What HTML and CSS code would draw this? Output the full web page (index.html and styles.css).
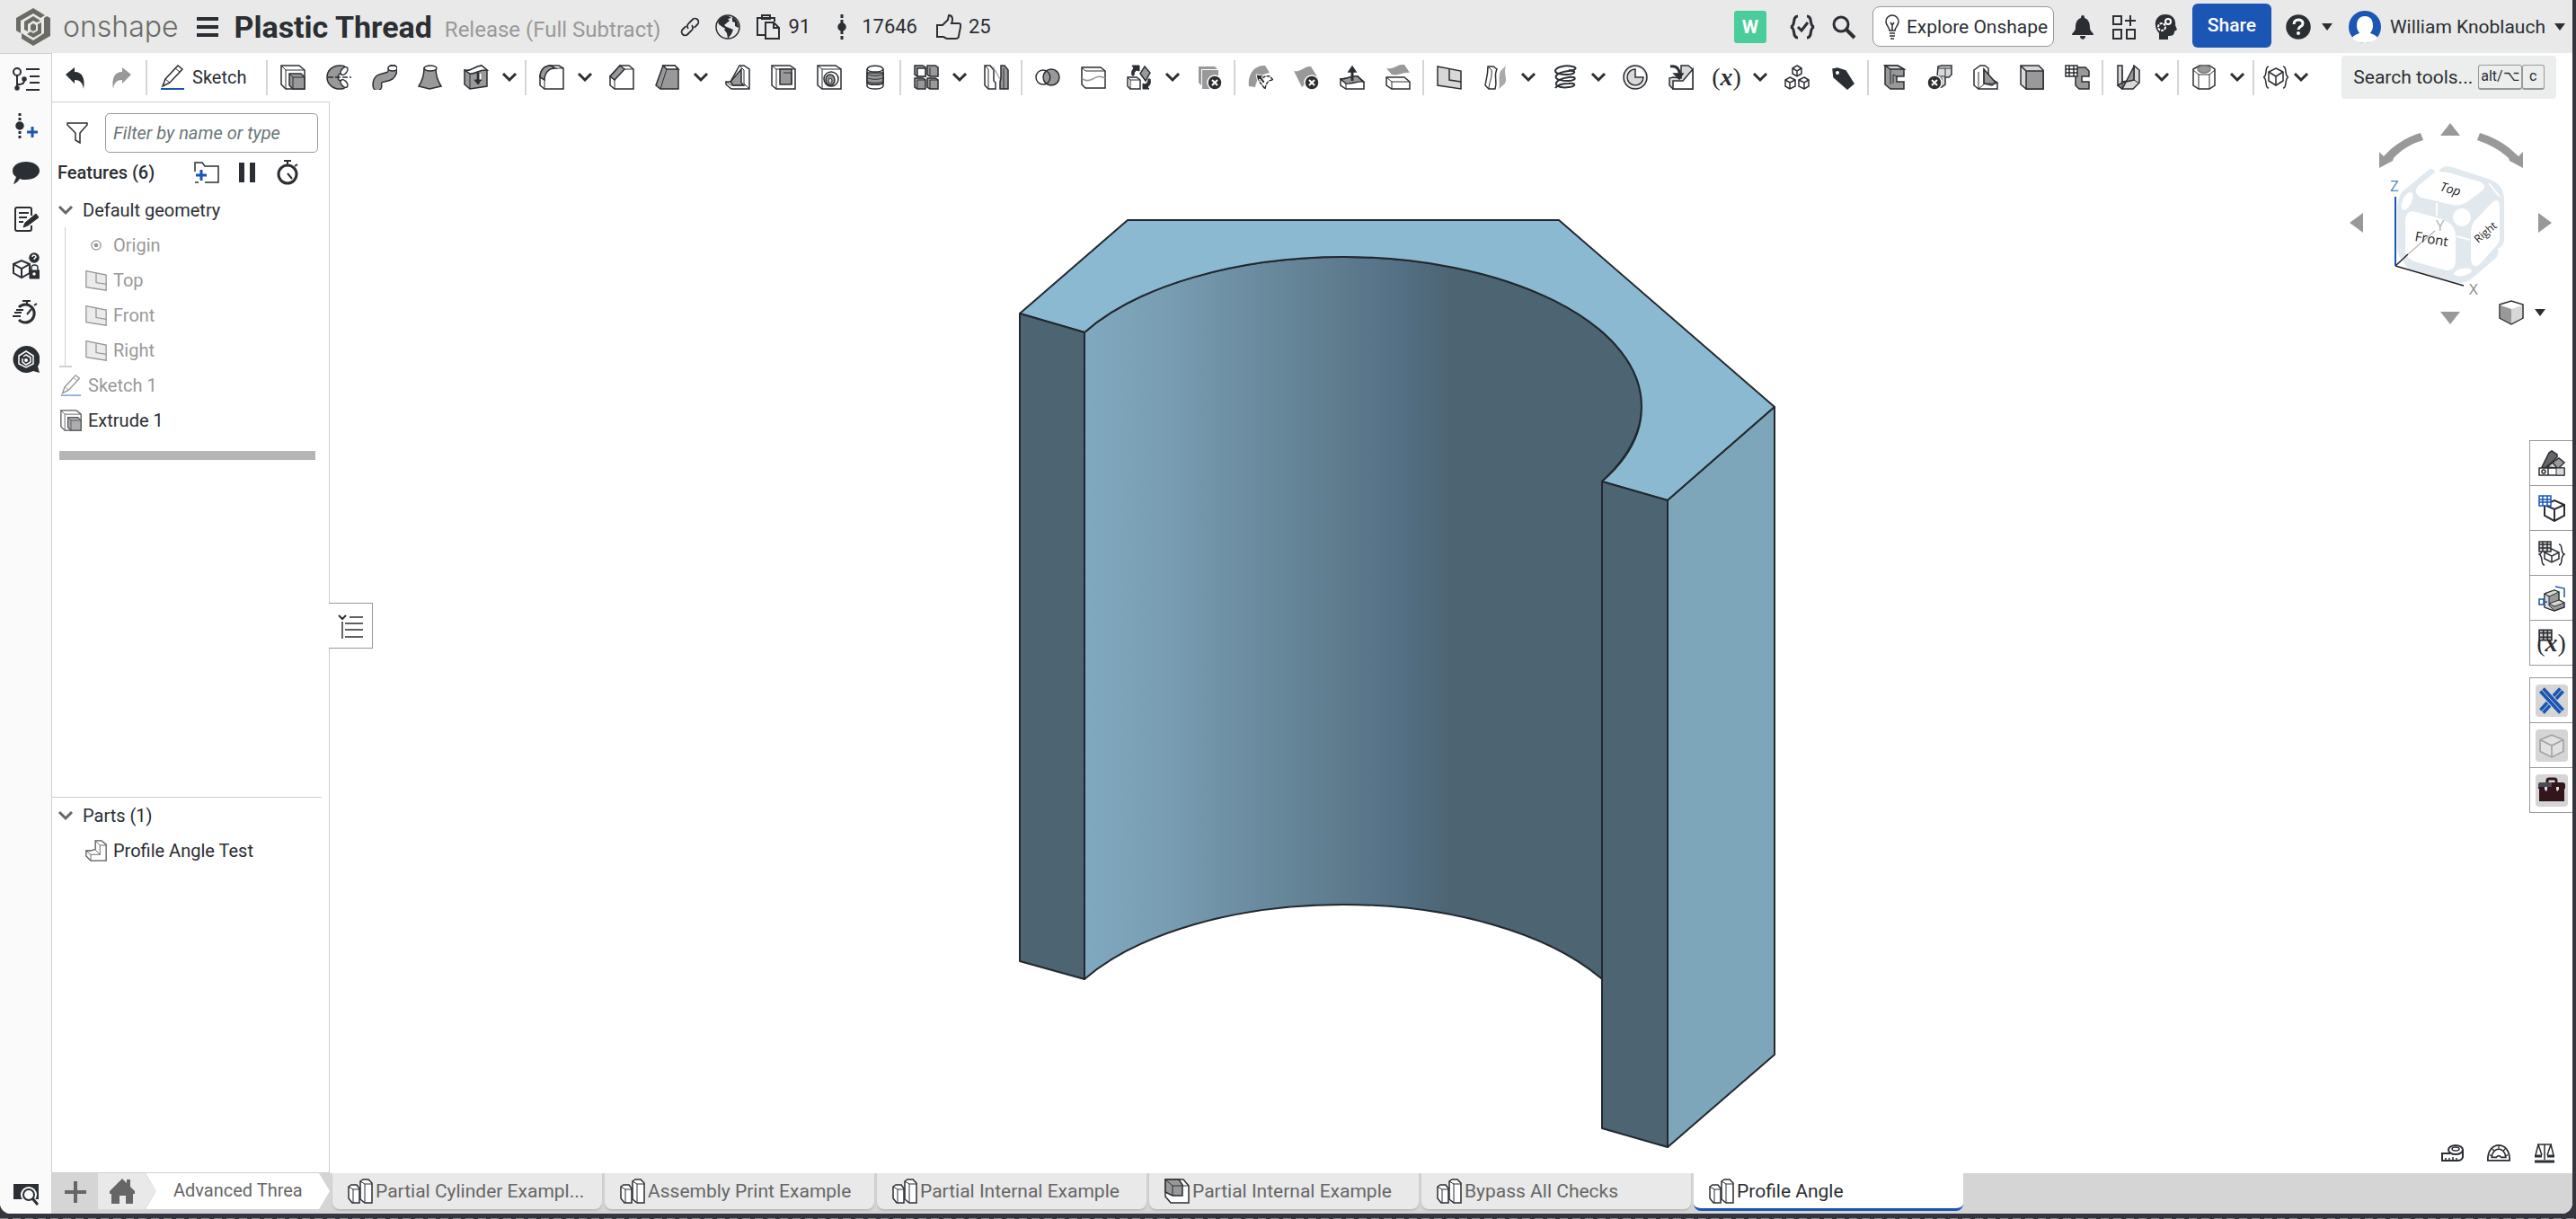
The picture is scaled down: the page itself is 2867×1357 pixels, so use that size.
FILE: index.html
```html
<!DOCTYPE html>
<html lang="en">
<head>
<meta charset="utf-8">
<title>Plastic Thread | Profile Angle</title>
<link rel="stylesheet" href="styles.css">
</head>
<body>
<svg class="sprite" aria-hidden="true">
  <symbol id="chev" viewBox="0 0 18 12"><path d="M2 2l7 7 7-7" stroke-width="3"/></symbol>
  <symbol id="caret" viewBox="0 0 12 8"><path class="k" stroke="none" d="M0 0h12L6 8z"/></symbol>
  <symbol id="extrude" viewBox="0 0 28 28"><path class="w" d="M1 1h20l6 5v21H6l-5-5z"/><path d="M1 1l5 5h21M6 6v21" stroke-width="1"/><path class="g" d="M10 10h13l4 4v13H14l-4-4z"/><path d="M10 10l4 4h13M14 14v13" stroke-width="1"/></symbol>
  <symbol id="revolve" viewBox="0 0 28 28"><path class="g" d="M17 1C8 0 1 6 1 14s7 14 16 13c3 0 5-2 6-4l-6-5c-5 0-5-8 0-8l6-5c-1-2-3-4-6-4z"/><ellipse class="w" cx="20" cy="7" rx="3" ry="5" transform="rotate(40 20 7)"/><ellipse class="w" cx="20" cy="21" rx="3" ry="5" transform="rotate(-40 20 21)"/><path d="M2 14h26" stroke-dasharray="6 2"/></symbol>
  <symbol id="sweep" viewBox="0 0 28 28"><path d="M6 24C4 8 23 20 23 5" stroke-width="11" stroke-linecap="round"/><path d="M6 24C4 8 23 20 23 5" stroke="#999" stroke-width="8" stroke-linecap="round"/><ellipse class="w" cx="23" cy="4" rx="5" ry="3"/></symbol>
  <symbol id="loft" viewBox="0 0 28 28"><path class="g" d="M7 4c0 8-2 14-6 20l12 3 13-3c-4-6-6-12-6-20z"/><ellipse class="w" cx="14" cy="4" rx="7" ry="3"/></symbol>
  <symbol id="thicken" viewBox="0 0 28 28"><path class="g" d="M1 6c6 3 10-4 19-5l6 5v18l-19 3-6-5z"/><path class="w" d="M1 6c6 3 10-4 19-5l6 5C17 5 13 11 7 10z"/><path d="M7 10v17" stroke-width="1"/><path d="M17 10v10" stroke="#fff" stroke-width="5"/><path class="k" d="M17 9v8h3l-4 5-4-5h3V9z" stroke-width="1"/></symbol>
  <symbol id="fillet" viewBox="0 0 28 28"><path class="w" d="M1 14C1 6 6 1 13 1h9l5 3v23H6l-5-4z"/><path class="g" d="M1 14C1 6 6 1 13 1l5 3C11 4 6 9 6 17z"/><path d="M6 17v10M18 4h9" stroke-width="1"/></symbol>
  <symbol id="chamfer" viewBox="0 0 28 28"><path class="w" d="M1 13L12 1h10l5 4v22H6l-5-4z"/><path class="g" d="M1 13L12 1l5 4L6 17z"/><path d="M6 17v10M17 5h10" stroke-width="1"/></symbol>
  <symbol id="draft" viewBox="0 0 28 28"><path class="g" d="M1 23L9 1h13l4 4v22H6z"/><path class="w" d="M9 1h13l4 4H13z"/><path d="M13 5L6 27" stroke-width="1"/></symbol>
  <symbol id="rib" viewBox="0 0 28 28"><path class="w" d="M1 19h5L16 1h5l6 4v22H7l-6-5z"/><path class="g" d="M6 19L18 5v15l3 3H9z"/><path d="M16 1l5 5v15l6 6M1 19l6 4h14" stroke-width="1"/></symbol>
  <symbol id="shell" viewBox="0 0 28 28"><path class="w" d="M1 1h20l6 4v22H6l-5-4z"/><path d="M1 1l5 4h21M6 5v22" stroke-width="1"/><path class="g" d="M10 5h13v17H10z"/><path d="M14 9h9v13" stroke-width="1"/></symbol>
  <symbol id="hole" viewBox="0 0 28 28"><path class="w" d="M1 1h20l6 4v22H6l-5-4z"/><path d="M1 1l5 4h21M6 5v22" stroke-width="1"/><ellipse class="w" cx="16" cy="16" rx="8" ry="8"/><ellipse class="g" cx="15" cy="17" rx="5" ry="6"/><ellipse class="l" cx="15" cy="18" rx="2" ry="3" stroke-width="1"/></symbol>
  <symbol id="thread" viewBox="0 0 28 28"><path class="w" d="M5 5v19c2 4 16 4 18 0V5c-2-5-16-5-18 0z"/><path class="g" d="M5 9h18v11c-2 3-16 3-18 0z"/><path d="M5 5c2 4 16 4 18 0" /><path d="M5 10c2 3 16 3 18 0M5 14c2 3 16 3 18 0M5 18c2 3 16 3 18 0" stroke-width="1"/></symbol>
  <symbol id="pattern" viewBox="0 0 28 28"><path class="g" d="M1 1h9l3 2v10H4l-3-2zM15 1h9l3 2v10h-9l-3-2zM1 15h9l3 2v10H4l-3-2zM15 15h9l3 2v10h-9l-3-2z"/><path class="w" d="M4 4h9v9H4z"/><path d="M18 3v9M4 17h9M18 17h9M18 17v10M4 17v10" stroke-width="1"/></symbol>
  <symbol id="mirror" viewBox="0 0 28 28"><path class="w" d="M1 1h6l4 5v12l2 2v7H5l-4-4z"/><path d="M1 1l4 4v22" stroke-width="1"/><path d="M10 2l8 14" stroke="#aaa"/><path class="g" d="M27 6v21h-9v-8l1-4V1h4z"/><path d="M22 4v23" stroke-width="1"/></symbol>
  <symbol id="boolean" viewBox="0 0 28 28"><circle class="w" cx="9" cy="14" r="8"/><circle class="g" cx="18" cy="14" r="9"/><path d="M13 7c5 4 5 10 0 14"/></symbol>
  <symbol id="split" viewBox="0 0 28 28"><path class="w" d="M1 3h21l5 4v19H5l-4-4z"/><path d="M1 3l4 4h22" stroke-width="1"/><path d="M1 15c2 2 6 4 12 1s8-4 14-1" stroke="#999"/></symbol>
  <symbol id="transform" viewBox="0 0 28 28"><path class="w" d="M1 14h10l4 3v10H4l-3-3z"/><path d="M1 14l3 3h11M4 17v10" stroke-width="1"/><path class="g" d="M20 2l6 7-5 9-6-8z"/><path class="k" d="M6 12c-1-4 0-6 2-8L6 1h8v6l-3-1c-2 1-3 3-3 6zM26 16c1 4 0 7-3 9l2 2h-7v-6l2 1c3-1 4-3 4-6z" stroke-width="1"/></symbol>
  <symbol id="delpart" viewBox="0 0 28 28"><path fill="#999" stroke="none" d="M2 2h18l3 3H5v18l-3-3zM6 6h18v21H6z"/><use href="#xdot"/></symbol>
  <symbol id="xdot" viewBox="0 0 28 28"><circle cx="20" cy="20" r="8" fill="#2b2e33" stroke="#fff"/><path d="M17 17l6 6M23 17l-6 6" stroke="#fff" stroke-width="2"/></symbol>
  <symbol id="modface" viewBox="0 0 28 28"><path fill="#999" stroke="none" d="M1 24C-1 10 8 0 19 1l5 8C15 10 9 17 8 25z"/><path class="w" d="M12 18c4-4 8-6 12-5l4 4c-5 0-8 3-9 10z" stroke-dasharray="4 1"/><path class="k" d="M9 11l9 1-3 2 4 5-2 2-4-5-2 3z" stroke="#fff" stroke-width="1"/></symbol>
  <symbol id="delface" viewBox="0 0 28 28"><path fill="#999" stroke="none" d="M0 7c7 2 12-6 19-5l8 13-4 7C17 17 11 23 9 25z"/><use href="#xdot"/></symbol>
  <symbol id="moveface" viewBox="0 0 28 28"><path class="w" d="M1 16l19-3 7 6v8H7l-6-4z"/><path class="g" d="M1 16c6 1 12-5 19-3l6 6c-7-1-12 3-19 2z"/><path d="M7 21v6" stroke-width="1"/><path d="M14 18V5" stroke-width="3"/><path class="k" d="M10 8l4-6 4 6z"/></symbol>
  <symbol id="repface" viewBox="0 0 28 28"><path fill="#999" stroke="none" d="M1 4c8 2 12-5 20-4l6 9c-8-1-12 4-20 2z"/><path class="w" d="M1 14h20l6 5v8H7l-6-4z"/><path d="M1 14l6 5h20M7 19v8" stroke-width="1"/></symbol>
  <symbol id="plane" viewBox="0 0 28 28"><path class="l" d="M1 2l26 5v20L1 23z"/><path d="M14 5v12l13 2"/></symbol>
  <symbol id="sheet" viewBox="0 0 28 28"><path class="w" d="M6 2h6l4 3c-4 8 1 12-2 22H7l-4-4C4 16 6 12 6 2z"/><path d="M6 2l4 4c1 9-3 14-3 21" stroke-width="1"/><path fill="#aaa" stroke="none" d="M20 7l6-6c-3 8 2 14-1 20l-7 6c2-7-1-12 2-20z"/></symbol>
  <symbol id="helix" viewBox="0 0 28 28"><path d="M18 6c8 1 10-3 4-4C14 0 3 3 3 7c0 3 8 4 14 4 10-1 9-5 1-4C9 8 2 11 4 15c2 3 8 3 14 3 10-1 8-5 0-4-8 1-15 4-14 8 1 3 8 4 14 3 9-1 8-5 0-4-7 0-13 2-15 5" stroke-width="2"/></symbol>
  <symbol id="clock" viewBox="0 0 28 28"><circle class="l" cx="14" cy="14" r="13"/><circle class="w" cx="14" cy="14" r="11" stroke="none"/><path class="l" d="M14 5a9 9 0 1 0 9 9h-9z"/></symbol>
  <symbol id="derive" viewBox="0 0 28 28"><path class="l" d="M14 1h8l5 4v22H5l-4-4v-8l4-1 9 1z"/><path class="w" d="M5 18h11l11-13v22H5z"/><path d="M2 2c8-1 11 4 10 11" stroke-width="3"/><path class="k" d="M6 10h10l-4 6z"/></symbol>
  <symbol id="cubes" viewBox="0 0 28 28"><path class="w" d="M14 1l5 3v6l-5 3-5-3V4zM6 14l6 3v7l-6 3-5-3v-7zM22 14l5 3v7l-5 3-6-3v-7z"/><path d="M9 4l5 3 5-3M14 7v6M1 17l5 3 6-3M6 20v7M16 17l6 3 5-3M22 20v7"/></symbol>
  <symbol id="tag" viewBox="0 0 28 28"><path class="k" d="M3 5l5-1 9 3 9 14-7 6L4 14z"/><circle cx="8" cy="9" r="2" fill="#fff" stroke="none"/></symbol>
  <symbol id="frame" viewBox="0 0 28 28"><path class="g" d="M4 1h14l7 4v8h-8v6h8v8H10l-6-5z"/><path class="l" d="M4 1h14l7 4H10z"/><path d="M10 5v17M17 13l-4-2v10" stroke-width="1"/></symbol>
  <symbol id="unframe" viewBox="0 0 28 28"><path class="l" d="M12 2l4-1h11v10l-3 3h-4v8l-4 3H6V13h5z"/><path d="M11 13h9V4h6M12 4h8M7 15h9v8" stroke-width="1"/><circle class="k" cx="8" cy="20" r="8" stroke="#fff"/><path d="M5 17l6 6M11 17l-6 6" stroke="#fff" stroke-width="2"/></symbol>
  <symbol id="gusset" viewBox="0 0 28 28"><path class="w" d="M1 6l7-5h5l4 3v10l10 6v7H6l-5-4z"/><path class="g" d="M12 5l13 15-4 3-9-2z"/><path d="M6 8v19M12 4v17M6 27l7-6h14" stroke-width="1"/></symbol>
  <symbol id="endcap" viewBox="0 0 28 28"><path class="l" d="M2 1h20l5 5v21H8l-6-5z"/><path class="g" d="M8 7h19v20H8z"/><path d="M2 1l6 6"/></symbol>
  <symbol id="cutlist" viewBox="0 0 28 28"><path class="g" d="M12 3h11l4 4v6h-8v6h8v8H16l-4-4z"/><path class="w" d="M1 1h13v12H1z"/><path d="M1 5h13M1 9h13M5 1v12M10 1v12"/></symbol>
  <symbol id="sheetmetal" viewBox="0 0 28 28"><path class="l" d="M2 1h5v18l13-2V1l6 5v14l-7 7H7l-5-4z"/><path class="g" d="M20 2v15l-13 3-5 3 5 4z"/><path d="M20 17l5 3M7 5v22" stroke-width="1"/></symbol>
  <symbol id="mold" viewBox="0 0 28 28"><path class="w" d="M2 5l7-4h11l6 4v18l-6 4H8l-6-4z"/><path d="M2 6l6 5h12l6-5M8 11v16M20 11v16" stroke-width="1"/><ellipse class="g" cx="14" cy="5" rx="7" ry="4" stroke="#777"/></symbol>
  <symbol id="featcube" viewBox="0 0 28 28"><path d="M6 2C1 2 5 13 0 14c5 1 1 12 6 12M22 2c5 0 1 11 6 12-5 1-1 12-6 12"/><path class="w" d="M14 4l8 4v10l-8 5-8-5V8z"/><path d="M6 8l8 5 8-5M14 13v10"/></symbol>
  <symbol id="undo" viewBox="0 0 28 28"><path class="k" stroke="none" d="M3 11l10-8v5c9 0 12 8 10 19-1-7-4-10-10-10v4z"/></symbol>
  <symbol id="redo" viewBox="0 0 28 28"><path fill="#999" stroke="none" d="M25 11L15 3v5C6 8 3 16 5 27c1-7 4-10 10-10v4z"/></symbol>
  <symbol id="pencil" viewBox="0 0 28 28"><path class="w" d="M3 24l3-8L20 1l5 4L11 20z"/><path d="M6 16l5 4M17 4l5 4" stroke-width="1"/><path d="M1 27h26" stroke="#1b56b4" stroke-width="2"/></symbol>
  <symbol id="origin" viewBox="0 0 28 28"><circle cx="14" cy="14" r="6"/><circle class="k" cx="14" cy="14" r="2"/></symbol>
  <symbol id="part" viewBox="0 0 28 28"><path class="w" d="M1 14h6l6-2V1h8l6 5v21H7l-6-6z"/><path d="M13 1l6 6h8M19 7v12H7v8M1 14l6 5M13 13l6 6" stroke-width="1"/></symbol>
  <symbol id="studio" viewBox="0 0 28 28"><path class="w" d="M1 9l3-2h6l3 4v16H5l-4-5z"/><path d="M1 9l5 3h7M6 12v15" stroke-width="1"/><path class="w" d="M14 3l3-2h6l4 4v22h-8l-5-4z"/><path d="M14 3l5 3h8M19 6v21" stroke-width="1"/></symbol>
  <symbol id="cutblock" viewBox="0 0 28 28"><path class="w" d="M1 1h20l6 7v19H7l-6-7z"/><path class="g" d="M1 1h15l4 6v12H9l-8-4z"/><path d="M9 8v11M1 1l8 7h18" stroke-width="1"/></symbol>
  <symbol id="cube" viewBox="0 0 28 28"><path class="w" d="M14 3l12 5v12l-12 6-12-6V8z"/><path d="M2 8l12 6 12-6M14 14v12"/></symbol>
</svg>

<div class="app">
  <header class="topbar">
    <a class="brand" href="#" aria-label="Onshape">
      <svg class="logo" viewBox="0 0 38 42"><path d="M19 0l13 8-5 3-8-5L5 14v14l-5-3V11zM34 9l4 2v20L19 42 6 34v-6l13 8 12-8V11zM19 9l8 5-4 2-4-2-6 4v8l-4-2v-9zM28 16v12l-9 5-7-4 4-3 3 2 5-3V18zM19 17l3 2v5l-3 2-3-2v-5z" fill="#6b6b66" stroke="none" fill-rule="evenodd"/></svg>
      <span class="wordmark">onshape</span>
    </a>
    <button class="bare menu" aria-label="Document menu"><svg viewBox="0 0 24 22"><path d="M0 2h24M0 11h24M0 20h24" stroke-width="4"/></svg></button>
    <h1 class="doc">Plastic Thread</h1>
    <span class="workspace">Release (Full Subtract)</span>
    <div class="stats">
      <button class="bare" aria-label="Copy link"><svg class="i22" viewBox="0 0 24 24"><path d="M10 14a4 4 0 0 1 0-6l5-5a4 4 0 0 1 6 6l-4 4M14 10a4 4 0 0 1 0 6l-5 5a4 4 0 0 1-6-6l4-4" stroke-width="2"/></svg></button>
      <svg class="i28" viewBox="0 0 28 28"><circle cx="14" cy="14" r="13"/><path class="k" stroke="none" d="M3 8c4-6 8-7 12-6l3 2-4 1 2 2-6 5 5 4-1 1-6-3-4-3zM13 14l7 3-2 5-4 5-1-6-3-4zM19 3c4 1 7 6 7 12l-4-2 0-4-3-1z"/></svg>
      <span class="stat"><svg class="i28" viewBox="0 0 28 28"><path d="M10 23H2V4h19v4M7 1h9v4H7zM11 9h9l6 6v12H11zM20 9v6h6" stroke-width="2"/></svg>91</span>
      <span class="stat"><svg class="i28" viewBox="0 0 28 28"><path d="M14 0v28" stroke-width="3" stroke-dasharray="4 2"/><circle class="k" cx="14" cy="14" r="4"/></svg>17646</span>
      <span class="stat"><svg class="i28" viewBox="0 0 28 28"><path d="M1 12h6l6-6 1-5c4 0 5 4 3 9h8c3 0 2 3 2 4l-2 10c0 2-2 3-4 3h-8c-3 0-4-2-5-2H1z" stroke-width="2"/></svg>25</span>
    </div>
    <div class="account">
      <span class="badge">W</span>
      <button class="bare" aria-label="Feature status"><svg class="i28" viewBox="0 0 28 28"><path d="M9 2C2 2 7 13 1 14c6 1 1 12 8 12M19 2c7 0 2 11 8 12-6 1-1 12-8 12M9 14l4 4 7-9" stroke-width="3"/></svg></button>
      <button class="bare" aria-label="Search"><svg class="i28" viewBox="0 0 28 28"><circle cx="11" cy="11" r="8" stroke-width="3"/><path d="M17 17l9 9" stroke-width="4"/></svg></button>
      <button class="explore"><svg viewBox="0 0 16 28"><path d="M5 18c0-4-4-5-4-10a7 7 0 0 1 14 0c0 5-4 6-4 10zM5 21h6M5 24h6M6 27h4M6 9l2 3 2-3M8 12v6"/></svg>Explore Onshape</button>
      <button class="bare" aria-label="Notifications"><svg class="i28" viewBox="0 0 28 28"><path class="k" stroke="none" d="M14 1c2 0 2 2 2 3 5 2 6 6 6 11 0 4 4 5 4 8H2c0-3 4-4 4-8 0-5 1-9 6-11 0-1 0-3 2-3zM11 24h6c0 5-6 5-6 0z"/></svg></button>
      <button class="bare" aria-label="App store"><svg class="i28" viewBox="0 0 28 28"><path d="M2 2h9v9H2zM2 17h9v10H2zM17 17h9v10h-9zM21 1v12M15 7h12" stroke-width="2"/></svg></button>
      <button class="bare" aria-label="Learning center"><svg class="i28" viewBox="0 0 28 28"><path class="k" stroke="none" d="M7 28v-7C-1 12 3 0 14 0c8 0 12 6 11 12l2 5-3 2c0 4-2 5-7 5v4z"/><circle cx="17" cy="8" r="3" stroke="#fff" stroke-width="2"/><circle cx="10" cy="14" r="4" stroke="#fff" stroke-width="2" stroke-dasharray="3 1"/></svg></button>
      <button class="share">Share</button>
      <button class="bare drop" aria-label="Help"><svg class="i28" viewBox="0 0 28 28"><circle class="k" cx="14" cy="14" r="13"/><path d="M9 11c0-7 10-6 10-1 0 4-5 3-5 7" stroke="#fff" stroke-width="3"/><circle cx="14" cy="21" r="2" fill="#fff" stroke="none"/></svg><svg class="caret"><use href="#caret"/></svg></button>
      <button class="bare user"><svg class="avatar" viewBox="0 0 36 36"><circle cx="18" cy="18" r="18" fill="#1b56b4" stroke="none"/><path d="M18 6c7 0 9 5 9 11 0 4-2 6-3 8 4 1 7 3 8 5-2 3-8 6-14 6s-12-3-14-6c1-2 4-4 8-5-1-2-3-4-3-8 0-6 2-11 9-11z" fill="#fff" stroke="none"/></svg>William Knoblauch<svg class="caret"><use href="#caret"/></svg></button>
    </div>
  </header>

  <div class="workarea">
    <nav class="rail" aria-label="Panels">
      <button aria-label="Versions"><svg class="i30" viewBox="0 0 30 28"><circle cx="5" cy="6" r="4" stroke-width="2"/><circle class="k" cx="5" cy="24" r="2"/><path d="M5 10v14M5 20c8 0 8-2 8-6M15 3h15M19 11h11M19 18h11M15 26h15" stroke-width="2"/><circle class="k" cx="13" cy="14" r="2"/></svg></button>
      <button aria-label="Create version"><svg class="i30" viewBox="0 0 30 28"><path d="M8 0v28" stroke-width="3" stroke-dasharray="3 2"/><circle class="k" cx="8" cy="14" r="4"/><path d="M22 15v12M16 21h12" stroke="#1b56b4" stroke-width="3"/></svg></button>
      <button aria-label="Comments"><svg class="i30" viewBox="0 0 30 28"><path class="k" stroke="none" d="M15 2c8 0 15 4 15 10s-7 10-15 10c-3 0-5 0-7-1-2 3-4 5-7 6l3-8c-3-2-4-4-4-7C0 6 7 2 15 2z"/></svg></button>
      <button aria-label="Notes"><svg class="i30" viewBox="0 0 30 28"><path d="M21 10V3q0-2-2-2H5Q3 1 3 3v22q0 2 2 2h14q2 0 2-2v-4M7 7h11M7 12h9M7 17h5" stroke-width="2"/><path class="k" d="M14 18L26 8l3 4-12 9-5 2z" stroke-width="1"/></svg></button>
      <button aria-label="Properties"><svg class="i30" viewBox="0 0 30 28"><path d="M1 12l9-4 9 4v10l-9 5-9-5zM1 12l9 5 9-5M10 17v10" stroke-width="2"/><circle class="k" cx="24" cy="5" r="5"/><path d="M22 4c0-3 4-2 4 0 0 1-2 1-2 3" stroke="#fff"/><path class="k" d="M19 19h11v9H19z" stroke-width="1"/><path d="M21 19v-3c0-4 7-4 7 0v3"/><circle cx="24" cy="23" r="1" fill="#fff" stroke="#fff"/></svg></button>
      <button aria-label="Regeneration times"><svg class="i30" viewBox="0 0 30 28"><path d="M7 22a10 10 0 1 0 0-14" stroke-width="3"/><path d="M11 1h9M16 1v5M24 6l3-2M16 16l5-6M4 11h8M2 14h8M0 18h9" stroke-width="2"/></svg></button>
      <button aria-label="Assistant"><svg class="i30" viewBox="0 0 30 30"><path class="k" stroke="none" d="M15 0a15 15 0 0 1 13 23l2 7-7-2A15 15 0 1 1 15 0z"/><path d="M15 6l8 5v9l-8 4-8-4v-9zM12 12l3-2 5 3v5l-5 3-4-3v-4" stroke="#fff"/><circle cx="15" cy="16" r="2" fill="#fff" stroke="none"/></svg></button>
      <button class="last" aria-label="Find tab"><svg class="i30" viewBox="0 0 30 28"><path class="k" stroke="none" d="M1 3h28v17H1z"/><circle cx="18" cy="15" r="9" fill="#fafafa" stroke="none"/><circle cx="18" cy="15" r="6" stroke-width="2"/><path d="M22 19l6 7" stroke-width="3"/></svg></button>
    </nav>

    <div class="main">
      <div class="toolbar">
        <button class="tool" aria-label="Undo"><svg><use href="#undo"/></svg></button>
        <button class="tool" aria-label="Redo"><svg><use href="#redo"/></svg></button>
        <i class="sep"></i>
        <button class="tool sketch"><svg><use href="#pencil"/></svg>Sketch</button>
        <i class="sep"></i>
        <button class="tool" aria-label="Extrude"><svg><use href="#extrude"/></svg></button>
        <button class="tool" aria-label="Revolve"><svg><use href="#revolve"/></svg></button>
        <button class="tool" aria-label="Sweep"><svg><use href="#sweep"/></svg></button>
        <button class="tool" aria-label="Loft"><svg><use href="#loft"/></svg></button>
        <button class="tool" aria-label="Thicken"><svg><use href="#thicken"/></svg></button>
        <button class="more" aria-label="More solids"><svg><use href="#chev"/></svg></button>
        <i class="sep"></i>
        <button class="tool" aria-label="Fillet"><svg><use href="#fillet"/></svg></button>
        <button class="more" aria-label="More fillets"><svg><use href="#chev"/></svg></button>
        <button class="tool" aria-label="Chamfer"><svg><use href="#chamfer"/></svg></button>
        <button class="tool" aria-label="Draft"><svg><use href="#draft"/></svg></button>
        <button class="more" aria-label="More drafts"><svg><use href="#chev"/></svg></button>
        <button class="tool" aria-label="Rib"><svg><use href="#rib"/></svg></button>
        <button class="tool" aria-label="Shell"><svg><use href="#shell"/></svg></button>
        <button class="tool" aria-label="Hole"><svg><use href="#hole"/></svg></button>
        <button class="tool" aria-label="External thread"><svg><use href="#thread"/></svg></button>
        <i class="sep"></i>
        <button class="tool" aria-label="Pattern"><svg><use href="#pattern"/></svg></button>
        <button class="more" aria-label="More patterns"><svg><use href="#chev"/></svg></button>
        <button class="tool" aria-label="Mirror"><svg><use href="#mirror"/></svg></button>
        <i class="sep"></i>
        <button class="tool" aria-label="Boolean"><svg><use href="#boolean"/></svg></button>
        <button class="tool" aria-label="Split"><svg><use href="#split"/></svg></button>
        <button class="tool" aria-label="Transform"><svg><use href="#transform"/></svg></button>
        <button class="more" aria-label="More transforms"><svg><use href="#chev"/></svg></button>
        <button class="tool" aria-label="Delete part"><svg><use href="#delpart"/></svg></button>
        <i class="sep"></i>
        <button class="tool" aria-label="Modify fillet"><svg><use href="#modface"/></svg></button>
        <button class="tool" aria-label="Delete face"><svg><use href="#delface"/></svg></button>
        <button class="tool" aria-label="Move face"><svg><use href="#moveface"/></svg></button>
        <button class="tool" aria-label="Replace face"><svg><use href="#repface"/></svg></button>
        <i class="sep"></i>
        <button class="tool" aria-label="Plane"><svg><use href="#plane"/></svg></button>
        <button class="tool" aria-label="Surface"><svg><use href="#sheet"/></svg></button>
        <button class="more" aria-label="More surfaces"><svg><use href="#chev"/></svg></button>
        <button class="tool" aria-label="Helix"><svg><use href="#helix"/></svg></button>
        <button class="more" aria-label="More curves"><svg><use href="#chev"/></svg></button>
        <button class="tool" aria-label="Composite part"><svg><use href="#clock"/></svg></button>
        <button class="tool" aria-label="Derived"><svg><use href="#derive"/></svg></button>
        <button class="tool var">(<b>x</b>)</button>
        <button class="more" aria-label="More variables"><svg><use href="#chev"/></svg></button>
        <button class="tool" aria-label="Composite"><svg><use href="#cubes"/></svg></button>
        <button class="tool" aria-label="Tag"><svg><use href="#tag"/></svg></button>
        <i class="sep"></i>
        <button class="tool" aria-label="Frame"><svg><use href="#frame"/></svg></button>
        <button class="tool" aria-label="Frame trim"><svg><use href="#unframe"/></svg></button>
        <button class="tool" aria-label="Gusset"><svg><use href="#gusset"/></svg></button>
        <button class="tool" aria-label="End cap"><svg><use href="#endcap"/></svg></button>
        <button class="tool" aria-label="Cut list"><svg><use href="#cutlist"/></svg></button>
        <i class="sep"></i>
        <button class="tool" aria-label="Sheet metal"><svg><use href="#sheetmetal"/></svg></button>
        <button class="more" aria-label="More sheet metal"><svg><use href="#chev"/></svg></button>
        <i class="sep"></i>
        <button class="tool" aria-label="Mold"><svg><use href="#mold"/></svg></button>
        <button class="more" aria-label="More molds"><svg><use href="#chev"/></svg></button>
        <i class="sep"></i>
        <button class="tool combo" aria-label="Custom features"><svg><use href="#featcube"/></svg><svg class="cv"><use href="#chev"/></svg></button>
        <button class="search">Search tools... <span class="keys"><kbd>alt/⌥</kbd><kbd>c</kbd></span></button>
      </div>

      <div class="stage">
        <aside class="features">
          <div class="list">
            <div class="filter">
              <svg viewBox="0 0 24 24"><path d="M1 1h22v2l-8 9v11l-5-3v-8L1 3z"/></svg>
              <input type="text" placeholder="Filter by name or type" aria-label="Filter by name or type">
            </div>
            <div class="heading">
              <h2>Features (6)</h2>
              <button class="bare" aria-label="Add folder"><svg class="i28" viewBox="0 0 28 28"><path d="M1 13V3h8l3 4h15v18H12M1 25h4"/><path d="M8 11v12M2 17h12" stroke="#1b56b4" stroke-width="3"/></svg></button>
              <button class="bare" aria-label="Pause"><svg class="i28" viewBox="0 0 28 28"><path d="M8 3v22M20 3v22" stroke-width="6"/></svg></button>
              <button class="bare" aria-label="Timing"><svg class="i28" viewBox="0 0 28 28"><circle cx="14" cy="16" r="10" stroke-width="3"/><path d="M10 1h8M14 1v5M22 7l3-2M14 15l5 6" stroke-width="2"/></svg></button>
            </div>
            <ul class="tree">
              <li class="row top"><svg class="cv"><use href="#chev"/></svg>Default geometry</li>
              <li>
                <ul class="group">
                  <li class="row dim"><svg class="ic"><use href="#origin"/></svg>Origin</li>
                  <li class="row dim"><svg class="ic"><use href="#plane"/></svg>Top</li>
                  <li class="row dim"><svg class="ic"><use href="#plane"/></svg>Front</li>
                  <li class="row dim"><svg class="ic"><use href="#plane"/></svg>Right</li>
                </ul>
              </li>
              <li class="row feat dim"><svg class="ic"><use href="#pencil"/></svg>Sketch 1</li>
              <li class="row feat"><svg class="ic soft"><use href="#extrude"/></svg>Extrude 1</li>
            </ul>
            <div class="rollback"></div>
          </div>
          <div class="parts">
            <ul class="tree">
              <li class="row top"><svg class="cv"><use href="#chev"/></svg>Parts (1)</li>
              <li class="row item"><svg class="ic soft"><use href="#part"/></svg>Profile Angle Test</li>
            </ul>
          </div>
        </aside>

        <main class="viewport">
          <svg class="model" viewBox="367 113 2496 1193" role="img" aria-label="Profile angle part">
            <defs><linearGradient id="wall" gradientUnits="userSpaceOnUse" x1="1207" x2="1614" y1="0" y2="0">
              <stop offset="0" stop-color="#80a8be"/><stop offset=".2" stop-color="#7a9fb5"/><stop offset=".44" stop-color="#6c8da2"/><stop offset=".68" stop-color="#5f7d8f"/><stop offset=".86" stop-color="#547085"/><stop offset="1" stop-color="#4d6573"/>
            </linearGradient></defs>
            <path fill="url(#wall)" d="M1207 370A332 166 0 0 1 1495 286A332 166 0 0 1 1827 452Q1827 495 1783 536V1090A332 166 0 0 0 1495 1007A332 166 0 0 0 1207 1090z"/>
            <path fill="#8cb9d2" d="M1255 245H1735L1975 453L1856 557L1783 536A332 166 0 0 0 1827 452A332 166 0 0 0 1495 286A332 166 0 0 0 1207 370L1135 349z"/>
            <path fill="#4d6573" d="M1135 349l72 21v720l-72-20zM1783 536l73 21v720l-73-21z"/>
            <path fill="#7ea6ba" d="M1856 557l119-104v721l-119 103z"/>
          </svg>

          <button class="handle" aria-label="Toggle feature list"><svg class="i28" viewBox="0 0 28 28"><path d="M1 2l4 4 4-4" stroke-width="2"/><path d="M5 9v19" stroke="#666" stroke-width="2"/><path d="M13 4h15M8 11h20M8 18h20M8 26h20"/></svg></button>

          <svg class="viewcube" viewBox="0 0 307 280" role="img" aria-label="View cube">
            <g fill="#999" stroke="none"><path d="M167 27l11 14h-22zM167 251l11-14h-22zM55 138l15-11v22zM280 138l-15-11v22z"/><path d="M134 38l3 8c-14 4-25 11-33 20l-1 3-15 8V59l5 5c11-12 24-21 41-26zM200 38l-3 8c15 5 25 11 35 20l1 3 15 8V59l-5 5c-12-12-26-21-43-26z"/></g>
            <path fill="#e1e8ee" stroke="none" d="M113 104l30-25q5-3 7 3h4q3-9 15-6l40 13q18 6 18 24v45q-1 6-7 9 2 6-3 11l-26 22q-9 7-19 4l-46-13q-8-2-11-10-6-5-7-14v-44q0-11 5-19z"/>
            <g fill="#fff" stroke="none"><path d="M131 97l16-13q6-4 18-2l34 10q10 4 4 10l-16 12q-9 6-18 4l-34-8q-10-4-4-13zM125 125l30 8q18 5 18 20v28q-1 11-11 10l-32-9q-13-4-13-14v-33q1-10 8-10zM193 137l20-21q8-7 9 3v36q0 5-4 9l-17 19q-9 8-11-4v-28q0-9 3-14z"/><circle cx="180" cy="132" r="10"/><ellipse cx="119" cy="114" rx="5" ry="11" transform="rotate(25 119 114)"/><ellipse cx="181" cy="193" rx="10" ry="4" transform="rotate(-12 181 193)"/></g>
            <path d="M152 116v14M174 153l15 4M210 94l12 15" stroke="#fff" stroke-width="2"/>
            <path d="M106 186l76 22M106 186l14-13" stroke="#222"/><path d="M120 173l30-26" stroke="#bbb"/><path d="M106 186v-77" stroke="#1b56b4" stroke-width="2"/>
            <g class="cubetext"><text x="155" y="102" font-size="14" font-style="italic" transform="rotate(16 155 102)">Top</text><text x="127" y="158" font-size="15" transform="rotate(10 127 158)">Front</text><text x="198" y="161" font-size="12" transform="rotate(-40 198 161)">Right</text><text x="100" y="103" font-size="17" fill="#5588bb">Z</text><text x="151" y="147" font-size="17" fill="#b5b5b5">Y</text><text x="188" y="218" font-size="17" fill="#888">X</text></g>
          </svg>
          <button class="bare shade" aria-label="View style"><svg class="i28" viewBox="0 0 28 28"><path class="w" d="M1 5l13-4 13 4v15l-13 7-13-7z"/><path d="M2 6l12 4v16l-12-6z" fill="#999" stroke="none"/><path d="M14 10l12-4v14l-12 6z" fill="#d8d8d8" stroke="none"/></svg><svg class="caret"><use href="#caret"/></svg></button>

          <div class="sidebar">
            <div class="stack">
              <button aria-label="Appearance"><svg class="i30" viewBox="0 0 30 30"><path fill="#666" d="M4 19L12 3l3-2 6 4v3L8 20z"/><path class="g" d="M10 18l13-9 6 5-8 8z"/><path class="l" d="M10 19l6-5 5 6z"/><path class="w" d="M1 20h28v8H1z"/><path class="l" d="M20 20h9v8h-9z" stroke-width="1"/><path d="M11 20v8"/><circle cx="6" cy="24" r="2"/></svg></button>
              <button aria-label="Configurations"><svg class="i30" viewBox="0 0 30 30"><path class="w" d="M7 11l11-5 11 5v12l-11 6-11-6z" stroke-width="2"/><path d="M7 11l11 5 11-5M18 16v13" stroke-width="2"/><path d="M1 1h13v11H1zM1 5h13M1 8h13M5 1v11M10 1v11" fill="#fff" stroke="#1b56b4"/></svg></button>
              <button aria-label="Configured features"><svg class="i30" viewBox="0 0 30 30"><path d="M7 28c-5 0-1-10-6-12 4-1 2-3 2-6M23 5c5 0 1 9 6 11-5 2-1 12-6 12"/><path class="w" d="M7 14l8-4 8 4v7l-8 4-8-4z"/><path d="M7 14l8 4 8-4M15 18v7"/><path class="l" d="M1 2h13v11H1zM1 5h13M1 9h13M5 2v11M10 2v11"/></svg></button>
              <button aria-label="Dimensions"><svg class="i30" viewBox="0 0 30 30"><path class="g" d="M7 10l11-4 5 2v9l6 3v5l-11 4-11-4z"/><path class="l" d="M7 10l5 3v10l6 6-11-4zM12 13l11-5-5-2-11 4zM18 24l11-4-6-3-11 4z" stroke-width="1"/><path d="M19 2l10 2v10M1 16h5v6H1zM6 19h4" stroke="#1b56b4"/></svg></button>
              <button aria-label="Variable table"><svg class="over" viewBox="0 0 14 12"><path class="l" d="M1 1h12v10H1zM1 4h12M1 8h12M5 1v10M9 1v10"/></svg><span class="var">(<b>x</b>)</span></button>
            </div>
            <div class="stack">
              <button aria-label="App one"><span class="tile"><svg class="i30" viewBox="0 0 30 30"><path d="M26 3L4 27" stroke="#1b56b4" stroke-width="8"/><path d="M26 3L4 27" stroke="#d5d5d5" stroke-width="1"/><path d="M4 3l22 24" stroke="#d5d5d5" stroke-width="10"/><path d="M4 3l22 24" stroke="#1b56b4" stroke-width="8"/><path d="M4 3l22 24" stroke="#d5d5d5" stroke-width="1"/></svg></span></button>
              <button aria-label="App two"><span class="tile faint"><svg class="i30"><use href="#cube"/></svg></span></button>
              <button aria-label="Toolbox"><span class="tile"><svg class="i30" viewBox="0 0 30 30"><path d="M10 8V4q0-2 2-2h6q2 0 2 2v4" stroke="#33151c" stroke-width="3"/><path d="M0 9q0-3 3-3h24q3 0 3 3v4h-1v14H1V13H0z" fill="#33151c" stroke="none"/><path d="M0 9q0-3 3-3h12v5H0z" fill="#4b4a55" stroke="none"/><path d="M7 11h3v3l-1 2-2-2zM20 11h3v3l-2 2-1-2z" fill="#ddd" stroke="none"/></svg></span></button>
            </div>
          </div>

          <div class="measure">
            <button class="bare" aria-label="Measure"><svg viewBox="0 0 26 22"><ellipse cx="16" cy="7" rx="8" ry="5" stroke-width="2"/><ellipse cx="16" cy="6" rx="4" ry="2"/><path d="M24 7v8q-1 4-6 4H1v-8h9" stroke-width="2"/><path d="M5 19v-3M9 19v-3M13 19v-4M17 19v-3"/></svg></button>
            <button class="bare" aria-label="Angle"><svg viewBox="0 0 30 22"><path d="M1 20C0-6 30-6 29 20z" stroke-width="2"/><path d="M6 16c1-14 17-14 18 0h-6q-3-4-6 0z" stroke-width="2"/><path d="M3 13l3 1M7 5l2 3M15 1v3M23 5l-2 3M27 13l-3 1"/></svg></button>
            <button class="bare" aria-label="Mass properties"><svg viewBox="0 0 22 22"><path d="M3 1h16M11 1v17M4 1L1 13M4 1l4 12M18 1l-4 12M18 1l3 12"/><path d="M0 14h8M14 14h8M0 20h22" stroke-width="3"/></svg></button>
          </div>
        </main>
      </div>

      <nav class="tabs" aria-label="Tabs">
        <button class="add" aria-label="Add tab"><svg viewBox="0 0 24 24"><path d="M12 0v24M0 12h24" stroke="#666" stroke-width="4"/></svg></button>
        <button class="home" aria-label="Home"><svg class="i28" viewBox="0 0 28 28"><path d="M14 0l5 5V1h4v8l5 5v3h-2v11h-8v-9h-7v9H2V17H0v-3z" fill="#666" stroke="none"/></svg></button>
        <a class="crumb" href="#"><span>Advanced Threa</span></a>
        <a class="tab" href="#"><svg class="i28"><use href="#studio"/></svg><span>Partial Cylinder Exampl...</span></a>
        <a class="tab" href="#"><svg class="i28"><use href="#studio"/></svg><span>Assembly Print Example</span></a>
        <a class="tab" href="#"><svg class="i28"><use href="#studio"/></svg><span>Partial Internal Example</span></a>
        <a class="tab" href="#"><svg class="i28"><use href="#cutblock"/></svg><span>Partial Internal Example</span></a>
        <a class="tab" href="#"><svg class="i28"><use href="#studio"/></svg><span>Bypass All Checks</span></a>
        <a class="tab active" href="#" aria-current="page"><svg class="i28"><use href="#studio"/></svg><span>Profile Angle</span></a>
      </nav>
    </div>
  </div>
</div>
</body>
</html>
```
FILE: styles.css
```css
:root {
  --ink: #2b2e33;
  --line: #d0d0d0;
  --blue: #1b56b4;
}

* { box-sizing: border-box; }

body {
  margin: 0;
  height: 100vh;
  padding: 0 4px 6px 0;
  background: repeating-linear-gradient(90deg, #85858a 0 9px, #35353f 9px 14px) 0 100% / 100% 1px no-repeat #35353f;
  font: 20px/24px Roboto, "Liberation Sans", sans-serif;
  color: var(--ink);
}

button {
  font: inherit;
  color: inherit;
  border: 0;
  padding: 0;
  background: none;
}

a { color: inherit; text-decoration: none; }
ul { list-style: none; margin: 0; padding: 0; }
svg { display: block; flex: none; fill: none; stroke: var(--ink); stroke-width: 1.5; }
.sprite { position: absolute; width: 0; height: 0; }
.w { fill: #fff; }
.g { fill: #999; }
.l { fill: #d8d8d8; }
.k { fill: var(--ink); }
.i22 { width: 22px; height: 22px; }
.i28 { width: 28px; height: 28px; }
.i30 { width: 30px; height: 30px; }
.caret { width: 12px; height: 8px; }
.cv { width: 18px; height: 12px; }

.app {
  height: 100%;
  display: flex;
  flex-direction: column;
  background: #fff;
  border-radius: 0 0 12px 12px;
  overflow: hidden;
}

/* Document bar */
.topbar {
  flex: none;
  height: 59px;
  display: flex;
  align-items: center;
  padding: 0 8px 0 18px;
  background: #e9e9e9;
  font-size: 21px;
}
.brand { display: flex; align-items: center; gap: 14px; margin-right: 20px; }
.logo { width: 38px; height: 42px; }
.wordmark { font: 300 32px/40px Inter, sans-serif; color: #6b6b66; }
.bare { display: flex; align-items: center; }
.menu svg { width: 24px; height: 22px; }
.doc { margin: 0 14px 0 18px; font-size: 34px; line-height: 40px; font-weight: 700; }
.workspace { font-size: 24px; color: #999; margin-right: 22px; padding-top: 6px; }
.stats { display: flex; align-items: center; gap: 17px; font-size: 22px; }
.stat { display: flex; align-items: center; gap: 8px; margin-right: 4px; }
.account { margin-left: auto; display: flex; align-items: center; gap: 18px; }
.badge {
  width: 36px; height: 36px;
  margin-right: 8px;
  border-radius: 3px;
  background: #4acd9b;
  color: #fff;
  font-weight: 700;
  line-height: 36px;
  text-align: center;
}
.explore {
  display: flex; align-items: center; gap: 8px;
  width: 202px; height: 45px;
  padding-left: 13px;
  border: 1px solid #999;
  border-radius: 8px;
  background: #fff;
  white-space: nowrap;
}
.explore svg { width: 16px; height: 28px; }
.share {
  width: 88px; height: 49px;
  margin: -3px -2px 0;
  border-radius: 6px;
  background: var(--blue);
  color: #fff;
  font-weight: 500;
}
.drop { gap: 12px; }
.user { gap: 10px; }
.avatar { width: 36px; height: 36px; }

/* Work area */
.workarea { flex: 1; min-height: 0; display: flex; }
.rail {
  width: 58px;
  display: flex;
  flex-direction: column;
  align-items: center;
  padding-top: 2px;
  background: #fafafa;
  border-right: 1px solid var(--line);
  border-top: 1px solid var(--line);
}
.rail button { height: 52px; display: flex; align-items: center; }
.rail .last { margin-top: auto; height: 44px; }
.main { flex: 1; min-width: 0; display: flex; flex-direction: column; }

.toolbar {
  flex: none;
  height: 54px;
  display: flex;
  align-items: center;
}
.tool { width: 51px; height: 48px; flex: none; display: flex; align-items: center; justify-content: center; }
.tool svg { width: 28px; height: 28px; }
.sketch { width: 128px; padding-left: 12px; gap: 8px; justify-content: flex-start; }
.more { width: 23px; height: 48px; margin-right: 4px; flex: none; display: flex; align-items: center; justify-content: center; }
.more svg, .tool .cv { width: 18px; height: 12px; }
.combo { width: 66px; gap: 5px; }
.sep { flex: none; width: 2px; height: 39px; margin: 0 2px; background: #d5d5d5; }
.var { font-family: "Liberation Serif", serif; font-size: 28px; line-height: 28px; }
.var b { font-style: italic; }
.search {
  width: 239px; height: 48px;
  margin: 0 18px 0 auto;
  display: flex; align-items: center; justify-content: center; gap: 6px;
  border-radius: 4px;
  background: #eceeed;
  font-size: 21px;
  white-space: nowrap;
}
.keys { display: flex; }
kbd {
  height: 28px;
  min-width: 25px;
  padding: 0 2px;
  border: 1px solid #999;
  border-bottom-width: 2px;
  border-radius: 3px;
  font: 16px/24px Roboto, sans-serif;
}

.stage { flex: 1; min-height: 0; display: flex; }
.features {
  width: 309px;
  display: flex;
  flex-direction: column;
  border: solid var(--line);
  border-width: 1px 1px 1px 0;
}
.list { flex: 1; }
.filter { display: flex; align-items: center; gap: 19px; padding: 12px 12px 0 16px; }
.filter svg { width: 24px; height: 24px; }
.filter input {
  flex: 1; min-width: 0; height: 44px;
  padding: 0 8px;
  border: 1px solid #999;
  border-radius: 5px;
  font: italic 20px/24px Roboto, sans-serif;
  background: #fff;
}
.filter input::placeholder { color: #6b7678; opacity: 1; }
.heading { display: flex; align-items: center; height: 44px; padding-left: 6px; }
.heading h2 { margin: 0; width: 152px; font-size: 20px; font-weight: 500; }
.heading .bare { margin-right: 17px; }
.row { display: flex; align-items: center; height: 39px; }
.top { padding-left: 6px; gap: 10px; }
.top .cv { stroke: #666; }
.group { margin-left: 14px; border-left: 1px solid var(--line); }
.group .row { padding-left: 22px; }
.group::after { content: ""; display: block; width: 14px; height: 2px; margin: -2px 0 0 -7px; background: var(--line); }
.feat { padding-left: 9px; }
.row .ic { width: 24px; height: 24px; margin-right: 7px; }
.dim { color: #999; }
.dim .ic { opacity: .5; }
.soft { opacity: .8; }
.item { padding-left: 37px; }
.rollback { height: 10px; margin: 15px 15px 0 8px; background: #b5b5b5; }
.parts { height: 418px; margin-right: 8px; border-top: 1px solid var(--line); }

.viewport { flex: 1; min-width: 0; position: relative; }
.model { width: 100%; height: 100%; stroke: #22282e; stroke-width: 2; stroke-linejoin: round; }
.handle {
  position: absolute; left: -1px; top: 558px;
  width: 49px; height: 51px;
  display: flex; align-items: center; justify-content: center;
  border: 1px solid #999;
  border-left: 0;
  background: #fff;
}
.viewcube { position: absolute; right: -4px; top: -3px; width: 307px; height: 280px; }
.cubetext { fill: #222; stroke: none; font-family: "Open Sans", sans-serif; }
.shade { position: absolute; right: 30px; top: 221px; gap: 12px; }
.sidebar { position: absolute; right: 0; top: 377px; display: flex; flex-direction: column; gap: 13px; }
.stack { border: solid #999; border-width: 1px 0 0 1px; background: #fff; }
.stack button {
  width: 47px; height: 50px;
  display: flex; align-items: center; justify-content: center;
  border-bottom: 1px solid #999;
  position: relative;
}
.over { position: absolute; left: 9px; top: 9px; width: 16px; height: 14px; }
.tile { width: 36px; height: 36px; display: flex; align-items: center; justify-content: center; border-radius: 4px; background: #d5d5d5; }
.faint svg { opacity: .3; }
.measure { position: absolute; right: 18px; bottom: 11px; display: flex; gap: 25px; }
.measure svg { height: 22px; width: 26px; }

/* Tab bar */
.tabs { flex: none; height: 45px; display: flex; align-items: flex-start; background: #d5d5d5; color: #666; font-size: 21px; }
.add { width: 51px; height: 42px; display: flex; align-items: center; justify-content: center; }
.add svg { width: 24px; height: 24px; }
.home { width: 65px; height: 40px; padding-left: 13px; background: #e9e9e9; clip-path: polygon(0 0, 52px 0, 100% 50%, 52px 100%, 0 100%); }
.crumb {
  width: 205px; height: 40px;
  margin: 0 3px 0 -12px;
  padding: 7px 28px 0 31px;
  background: #fff;
  clip-path: polygon(0 0, 193px 0, 100% 50%, 193px 100%, 0 100%, 12px 50%);
}
.crumb span { display: block; white-space: nowrap; font-size: 20px; }
.tab {
  width: 300px; height: 40px;
  margin-right: 3px;
  padding: 0 17px;
  display: flex; align-items: center; gap: 3px;
  background: #e9e9e9;
  border-radius: 0 0 8px 8px;
  box-shadow: 0 2px 2px #bbb;
}
.tab span { overflow: hidden; white-space: nowrap; text-overflow: ellipsis; }
.active { height: 42px; background: #fff; color: var(--ink); border-bottom: 3px solid var(--blue); box-shadow: none; }
```
